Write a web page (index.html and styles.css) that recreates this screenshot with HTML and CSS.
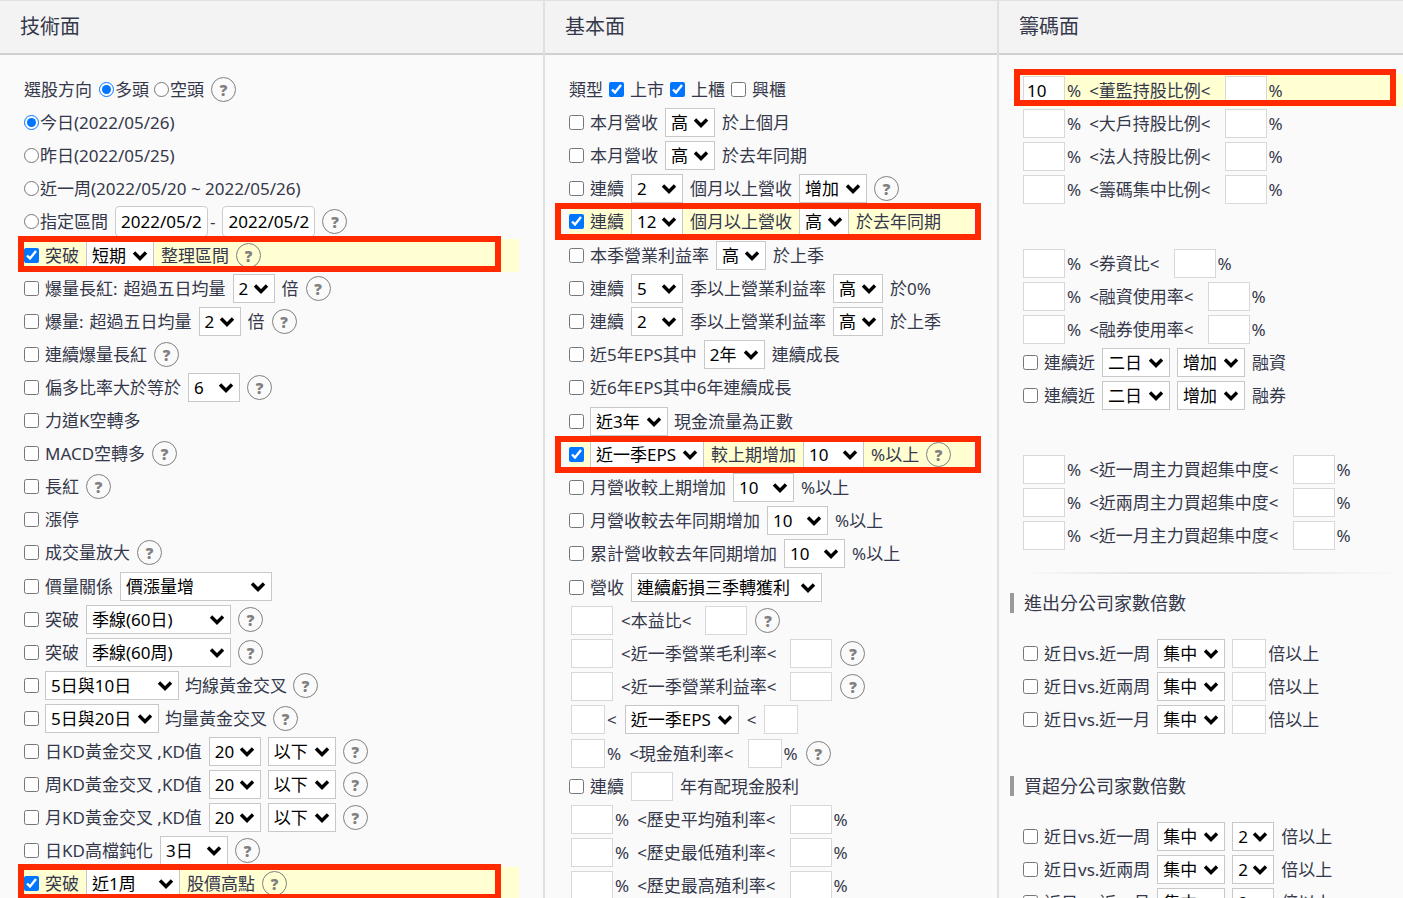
FILE: index.html
```html
<!DOCTYPE html>
<html lang="zh-Hant">
<head>
<meta charset="utf-8">
<title>選股條件</title>
<link rel="stylesheet" href="styles.css">
</head>
<body>
<main class="board">

<section class="col col-tech">
<h2 class="col-head">技術面</h2>
<div class="col-body">
<div class="row"><span>選股方向</span><div class="radios"><label class="radio"><input type="radio" name="dir" checked>多頭</label><label class="radio"><input type="radio" name="dir">空頭</label></div><button class="help" type="button">?</button></div>
<div class="row"><label class="radio"><input type="radio" name="date" checked>今日(2022/05/26)</label></div>
<div class="row"><label class="radio"><input type="radio" name="date">昨日(2022/05/25)</label></div>
<div class="row"><label class="radio"><input type="radio" name="date">近一周(2022/05/20 ~ 2022/05/26)</label></div>
<div class="row"><label class="radio"><input type="radio" name="date">指定區間</label><span class="unit"><input class="date" type="text" value="2022/05/26" aria-label="開始日期">-</span><input class="date" type="text" value="2022/05/26" aria-label="結束日期"><button class="help" type="button">?</button></div>
<div class="row hot"><label class="opt"><input type="checkbox" checked>突破</label><select class="w68" aria-label="期間"><option>短期</option></select><span>整理區間</span><button class="help" type="button">?</button></div>
<div class="row"><label class="opt"><input type="checkbox"><span>爆量長紅:</span><span>超過五日均量</span></label><select class="w42" aria-label="倍數"><option>2</option></select><span>倍</span><button class="help" type="button">?</button></div>
<div class="row"><label class="opt"><input type="checkbox"><span>爆量:</span><span>超過五日均量</span></label><select class="w42" aria-label="倍數"><option>2</option></select><span>倍</span><button class="help" type="button">?</button></div>
<div class="row"><label class="opt"><input type="checkbox">連續爆量長紅</label><button class="help" type="button">?</button></div>
<div class="row"><label class="opt"><input type="checkbox">偏多比率大於等於</label><select class="w52" aria-label="比率"><option>6</option></select><button class="help" type="button">?</button></div>
<div class="row"><label class="opt"><input type="checkbox">力道K空轉多</label></div>
<div class="row"><label class="opt"><input type="checkbox">MACD空轉多</label><button class="help" type="button">?</button></div>
<div class="row"><label class="opt"><input type="checkbox">長紅</label><button class="help" type="button">?</button></div>
<div class="row"><label class="opt"><input type="checkbox">漲停</label></div>
<div class="row"><label class="opt"><input type="checkbox">成交量放大</label><button class="help" type="button">?</button></div>
<div class="row"><label class="opt"><input type="checkbox">價量關係</label><select class="w152" aria-label="價量關係"><option>價漲量增</option></select></div>
<div class="row"><label class="opt"><input type="checkbox">突破</label><select class="w145" aria-label="均線"><option>季線(60日)</option></select><button class="help" type="button">?</button></div>
<div class="row"><label class="opt"><input type="checkbox">突破</label><select class="w145" aria-label="均線"><option>季線(60周)</option></select><button class="help" type="button">?</button></div>
<div class="row tight"><input type="checkbox" aria-label="均線黃金交叉"><select class="w134" aria-label="均線組合"><option>5日與10日</option></select><span>均線黃金交叉</span><button class="help" type="button">?</button></div>
<div class="row tight"><input type="checkbox" aria-label="均量黃金交叉"><select class="w114" aria-label="均量組合"><option>5日與20日</option></select><span>均量黃金交叉</span><button class="help" type="button">?</button></div>
<div class="row"><label class="opt"><input type="checkbox">日KD黃金交叉 ,KD值</label><select class="w52" aria-label="KD值"><option>20</option></select><select class="w68" aria-label="方向"><option>以下</option></select><button class="help" type="button">?</button></div>
<div class="row"><label class="opt"><input type="checkbox">周KD黃金交叉 ,KD值</label><select class="w52" aria-label="KD值"><option>20</option></select><select class="w68" aria-label="方向"><option>以下</option></select><button class="help" type="button">?</button></div>
<div class="row"><label class="opt"><input type="checkbox">月KD黃金交叉 ,KD值</label><select class="w52" aria-label="KD值"><option>20</option></select><select class="w68" aria-label="方向"><option>以下</option></select><button class="help" type="button">?</button></div>
<div class="row"><label class="opt"><input type="checkbox">日KD高檔鈍化</label><select class="w68" aria-label="天數"><option>3日</option></select><button class="help" type="button">?</button></div>
<div class="row hot"><label class="opt"><input type="checkbox" checked>突破</label><select class="w94" aria-label="期間"><option>近1周</option></select><span>股價高點</span><button class="help" type="button">?</button></div>
</div>
</section>

<section class="col col-fund">
<h2 class="col-head">基本面</h2>
<div class="col-body">
<div class="row tight"><span>類型</span><label class="opt"><input type="checkbox" checked>上市</label><label class="opt"><input type="checkbox" checked>上櫃</label><label class="opt"><input type="checkbox">興櫃</label></div>
<div class="row"><label class="opt"><input type="checkbox">本月營收</label><select class="w50" aria-label="比較"><option>高</option></select><span>於上個月</span></div>
<div class="row"><label class="opt"><input type="checkbox">本月營收</label><select class="w50" aria-label="比較"><option>高</option></select><span>於去年同期</span></div>
<div class="row"><label class="opt"><input type="checkbox">連續</label><select class="w52" aria-label="月數"><option>2</option></select><span>個月以上營收</span><select class="w68" aria-label="增減"><option>增加</option></select><button class="help" type="button">?</button></div>
<div class="row hot"><label class="opt"><input type="checkbox" checked>連續</label><select class="w52" aria-label="月數"><option>12</option></select><span>個月以上營收</span><select class="w50" aria-label="比較"><option>高</option></select><span>於去年同期</span></div>
<div class="row"><label class="opt"><input type="checkbox">本季營業利益率</label><select class="w50" aria-label="比較"><option>高</option></select><span>於上季</span></div>
<div class="row"><label class="opt"><input type="checkbox">連續</label><select class="w52" aria-label="季數"><option>5</option></select><span>季以上營業利益率</span><select class="w50" aria-label="比較"><option>高</option></select><span>於0%</span></div>
<div class="row"><label class="opt"><input type="checkbox">連續</label><select class="w52" aria-label="季數"><option>2</option></select><span>季以上營業利益率</span><select class="w50" aria-label="比較"><option>高</option></select><span>於上季</span></div>
<div class="row"><label class="opt"><input type="checkbox">近5年EPS其中</label><select class="w61" aria-label="年數"><option>2年</option></select><span>連續成長</span></div>
<div class="row"><label class="opt"><input type="checkbox">近6年EPS其中6年連續成長</label></div>
<div class="row tight"><input type="checkbox" aria-label="現金流量為正數"><select class="w78" aria-label="期間"><option>近3年</option></select><span>現金流量為正數</span></div>
<div class="row hot"><div class="opt"><input type="checkbox" checked aria-label="較上期增加"><select class="w114" aria-label="項目"><option>近一季EPS</option></select></div><span>較上期增加</span><select class="w61" aria-label="百分比"><option>10</option></select><span>%以上</span><button class="help" type="button">?</button></div>
<div class="row"><label class="opt"><input type="checkbox">月營收較上期增加</label><select class="w61" aria-label="百分比"><option>10</option></select><span>%以上</span></div>
<div class="row"><label class="opt"><input type="checkbox">月營收較去年同期增加</label><select class="w61" aria-label="百分比"><option>10</option></select><span>%以上</span></div>
<div class="row"><label class="opt"><input type="checkbox">累計營收較去年同期增加</label><select class="w61" aria-label="百分比"><option>10</option></select><span>%以上</span></div>
<div class="row"><label class="opt"><input type="checkbox">營收</label><select class="w191" aria-label="營收狀況"><option>連續虧損三季轉獲利</option></select></div>
<div class="row range"><input class="num" type="text" aria-label="本益比下限"><span class="between">&lt;本益比&lt;</span><input class="num" type="text" aria-label="本益比上限"><button class="help" type="button">?</button></div>
<div class="row range"><input class="num" type="text" aria-label="毛利率下限"><span class="between">&lt;近一季營業毛利率&lt;</span><input class="num" type="text" aria-label="毛利率上限"><button class="help" type="button">?</button></div>
<div class="row range"><input class="num" type="text" aria-label="利益率下限"><span class="between">&lt;近一季營業利益率&lt;</span><input class="num" type="text" aria-label="利益率上限"><button class="help" type="button">?</button></div>
<div class="row range"><span class="unit"><input class="num short" type="text" aria-label="EPS下限">&lt;</span><select class="w114" aria-label="項目"><option>近一季EPS</option></select><span>&lt;</span><input class="num short" type="text" aria-label="EPS上限"></div>
<div class="row range"><span class="unit"><input class="num short" type="text" aria-label="現金殖利率下限">%</span><span class="between">&lt;現金殖利率&lt;</span><span class="unit"><input class="num short" type="text" aria-label="現金殖利率上限">%</span><button class="help" type="button">?</button></div>
<div class="row"><label class="opt"><input type="checkbox">連續</label><input class="num" type="text" aria-label="年數"><span>年有配現金股利</span></div>
<div class="row range"><span class="unit"><input class="num" type="text" aria-label="平均下限">%</span><span class="between">&lt;歷史平均殖利率&lt;</span><span class="unit"><input class="num" type="text" aria-label="平均上限">%</span></div>
<div class="row range"><span class="unit"><input class="num" type="text" aria-label="最低下限">%</span><span class="between">&lt;歷史最低殖利率&lt;</span><span class="unit"><input class="num" type="text" aria-label="最低上限">%</span></div>
<div class="row range"><span class="unit"><input class="num" type="text" aria-label="最高下限">%</span><span class="between">&lt;歷史最高殖利率&lt;</span><span class="unit"><input class="num" type="text" aria-label="最高上限">%</span></div>
</div>
</section>

<section class="col col-chip">
<h2 class="col-head">籌碼面</h2>
<div class="col-body">
<div class="group">
<div class="row range hot"><span class="unit"><input class="num" type="text" value="10" aria-label="董監下限">%</span><span class="between">&lt;董監持股比例&lt;</span><span class="unit"><input class="num" type="text" aria-label="董監上限">%</span></div>
<div class="row range"><span class="unit"><input class="num" type="text" aria-label="大戶下限">%</span><span class="between">&lt;大戶持股比例&lt;</span><span class="unit"><input class="num" type="text" aria-label="大戶上限">%</span></div>
<div class="row range"><span class="unit"><input class="num" type="text" aria-label="法人下限">%</span><span class="between">&lt;法人持股比例&lt;</span><span class="unit"><input class="num" type="text" aria-label="法人上限">%</span></div>
<div class="row range"><span class="unit"><input class="num" type="text" aria-label="籌碼下限">%</span><span class="between">&lt;籌碼集中比例&lt;</span><span class="unit"><input class="num" type="text" aria-label="籌碼上限">%</span></div>
</div>
<div class="group">
<div class="row range"><span class="unit"><input class="num" type="text" aria-label="券資比下限">%</span><span class="between">&lt;券資比&lt;</span><span class="unit"><input class="num" type="text" aria-label="券資比上限">%</span></div>
<div class="row range"><span class="unit"><input class="num" type="text" aria-label="融資下限">%</span><span class="between">&lt;融資使用率&lt;</span><span class="unit"><input class="num" type="text" aria-label="融資上限">%</span></div>
<div class="row range"><span class="unit"><input class="num" type="text" aria-label="融券下限">%</span><span class="between">&lt;融券使用率&lt;</span><span class="unit"><input class="num" type="text" aria-label="融券上限">%</span></div>
<div class="row"><label class="opt"><input type="checkbox">連續近</label><select class="w68" aria-label="天數"><option>二日</option></select><select class="w68" aria-label="增減"><option>增加</option></select><span>融資</span></div>
<div class="row"><label class="opt"><input type="checkbox">連續近</label><select class="w68" aria-label="天數"><option>二日</option></select><select class="w68" aria-label="增減"><option>增加</option></select><span>融券</span></div>
</div>
<div class="group">
<div class="row range"><span class="unit"><input class="num" type="text" aria-label="一周下限">%</span><span class="between">&lt;近一周主力買超集中度&lt;</span><span class="unit"><input class="num" type="text" aria-label="一周上限">%</span></div>
<div class="row range"><span class="unit"><input class="num" type="text" aria-label="兩周下限">%</span><span class="between">&lt;近兩周主力買超集中度&lt;</span><span class="unit"><input class="num" type="text" aria-label="兩周上限">%</span></div>
<div class="row range"><span class="unit"><input class="num" type="text" aria-label="一月下限">%</span><span class="between">&lt;近一月主力買超集中度&lt;</span><span class="unit"><input class="num" type="text" aria-label="一月上限">%</span></div>
</div>
<hr class="rule">
<h3 class="sub">進出分公司家數倍數</h3>
<div class="group">
<div class="row"><label class="opt"><input type="checkbox">近日vs.近一周</label><select class="w68" aria-label="集中"><option>集中</option></select><span class="unit"><input class="num short" type="text" aria-label="倍數">倍以上</span></div>
<div class="row"><label class="opt"><input type="checkbox">近日vs.近兩周</label><select class="w68" aria-label="集中"><option>集中</option></select><span class="unit"><input class="num short" type="text" aria-label="倍數">倍以上</span></div>
<div class="row"><label class="opt"><input type="checkbox">近日vs.近一月</label><select class="w68" aria-label="集中"><option>集中</option></select><span class="unit"><input class="num short" type="text" aria-label="倍數">倍以上</span></div>
</div>
<h3 class="sub">買超分公司家數倍數</h3>
<div class="group">
<div class="row"><label class="opt"><input type="checkbox">近日vs.近一周</label><select class="w68" aria-label="集中"><option>集中</option></select><select class="w42" aria-label="倍數"><option>2</option></select><span>倍以上</span></div>
<div class="row"><label class="opt"><input type="checkbox">近日vs.近兩周</label><select class="w68" aria-label="集中"><option>集中</option></select><select class="w42" aria-label="倍數"><option>2</option></select><span>倍以上</span></div>
<div class="row"><label class="opt"><input type="checkbox">近日vs.近一月</label><select class="w68" aria-label="集中"><option>集中</option></select><select class="w42" aria-label="倍數"><option>2</option></select><span>倍以上</span></div>
</div>
</div>
</section>

</main>
</body>
</html>
```
FILE: styles.css
```css
* {
  box-sizing: border-box;
}

body {
  margin: 0;
  background: #fafafa;
  color: #35384a;
  font: 17px/24px "Noto Sans", "Noto Sans CJK TC", sans-serif;
}

input,
select,
button {
  margin: 0;
  font: inherit;
}

.board {
  display: grid;
  grid-template-columns: 545fr 454fr 404fr;
  min-height: 100vh;
  border-top: 1px solid #e0e0e0;
}

.col {
  min-width: 0;
  border-right: 2px solid #e0e0e0;
}

.col-chip {
  border-right: 0;
}

.col-head {
  margin: 0;
  padding: 11px 20px;
  border-bottom: 2px solid #d0d0d0;
  background: #f3f3f3;
  font-size: 20px;
  font-weight: 400;
  line-height: 30px;
}

.col-body {
  padding: 18px 24px 18px 24px;
}

.col-chip .col-body {
  padding: 19px 0 18px 24px;
}

.row {
  display: flex;
  align-items: center;
  gap: 7px;
  height: 33px;
  white-space: nowrap;
}

.row:nth-child(5n) {
  margin-bottom: 1px;
}

.col-tech .row:nth-child(10n) {
  margin-bottom: 0;
}

.col-fund .range {
  padding-left: 2px;
}

.range {
  gap: 8px;
}

.between {
  margin-right: 6px;
}

.tight {
  gap: 6px;
}

.opt {
  display: flex;
  align-items: center;
  gap: 6px;
}

.radio {
  display: flex;
  align-items: center;
  gap: 1px;
}

.radios {
  display: flex;
  gap: 5px;
}

.unit {
  display: flex;
  align-items: center;
  gap: 2px;
}

input[type="checkbox"],
input[type="radio"] {
  flex: none;
  width: 15px;
  height: 15px;
  accent-color: #0075ff;
}

select {
  flex: none;
  height: 29px;
  padding: 0 0 0 5px;
  border: 1px solid #c8c8c8;
  border-radius: 0;
  appearance: none;
  background: #fff url("data:image/svg+xml,%3Csvg xmlns='http://www.w3.org/2000/svg' width='16' height='12' viewBox='0 0 16 12'%3E%3Cpath d='M2 2.5 8 8.500l6-6' fill='none' stroke='%23000' stroke-width='3.4'/%3E%3C/svg%3E") no-repeat right 5px center;
  color: #000;
}

.w42 { width: 42px; }
.w50 { width: 50px; }
.w52 { width: 52px; }
.w61 { width: 61px; }
.w68 { width: 68px; }
.w78 { width: 78px; }
.w94 { width: 94px; }
.w114 { width: 114px; }
.w134 { width: 134px; }
.w145 { width: 145px; }
.w152 { width: 152px; }
.w191 { width: 191px; }

.num {
  flex: none;
  width: 42px;
  height: 29px;
  padding: 0 3px;
  border: 1px solid #d8d8d8;
  background: #fff;
  color: #000;
}

.short {
  width: 34px;
}

.date {
  flex: none;
  width: 93px;
  height: 31px;
  padding: 0 5px;
  border: 1px solid #ccc;
  border-radius: 4px;
  background: #fff;
  color: #000;
}

.help {
  flex: none;
  width: 25px;
  height: 25px;
  padding: 0;
  border: 1px solid #808080;
  border-radius: 50%;
  background: none;
  color: #808080;
  font-size: 15px;
  font-weight: 900;
  line-height: 20px;
}

/* Selected conditions: tinted row with a red marker frame over it */
.hot {
  position: relative;
  background: #ffffd2;
}

.hot::after {
  position: absolute;
  inset: -3px 18px 0 -6px;
  border: 6px solid #ff2a00;
  content: "";
  pointer-events: none;
}

.col-fund .hot::after {
  inset: -2px -8px -2px -14px;
}

.col-chip .hot::after {
  inset: -5px 7px 1px -9px;
}

.group + .group {
  margin-top: 41px;
}

.rule {
  height: 2px;
  margin: 20px 0 17px;
  border: 0;
  background: linear-gradient(to right, #fafafa, #e4e4e4 30%, #e4e4e4 60%, #fafafa);
}

.sub {
  display: flex;
  align-items: center;
  gap: 10px;
  margin: 0 0 22px -13px;
  font-size: 18px;
  font-weight: 400;
}

.sub::before {
  width: 4px;
  height: 20px;
  background: #999;
  content: "";
}

.group + .sub {
  margin-top: 38px;
}
```
